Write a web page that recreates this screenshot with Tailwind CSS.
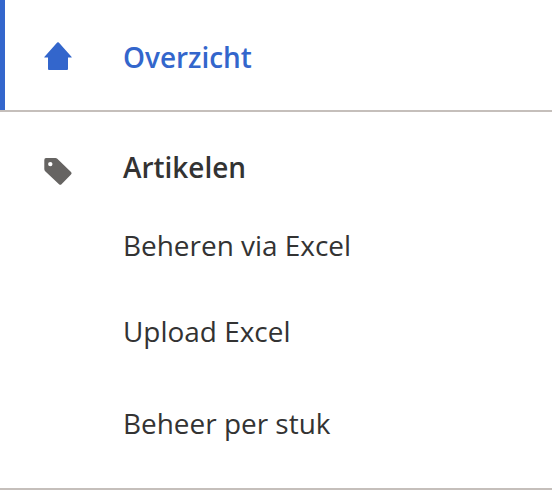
<!DOCTYPE html>
<html lang="nl"><head><meta charset="utf-8"><title>Menu</title><script src="https://cdn.jsdelivr.net/npm/@tailwindcss/browser@4"></script></head>
<body class="bg-white font-['Open_Sans',sans-serif] text-[27.95px] leading-[40px] text-[#333333] antialiased">
<nav class="flex h-[490px] w-[552px] flex-col overflow-hidden">
<a class="flex h-[112px] border-b-2 border-[#c5bfbb] font-semibold text-[#3366cc]"><span class="h-[110px] w-[5px] bg-[#3366cc]"></span>
<svg class="mt-[42px] ml-[39px] h-[29px] w-[28px]" viewBox="0 0 28 29" fill="#3366cc"><path d="M13.200 .6Q14 -.1 14.800 .6L27.700 15Q27.900 15.500 27.300 15.500H24V27Q24 28 23 28H5Q4 28 4 27V15.500H.7Q.1 15.500 .3 15Z"/></svg>
<span class="mt-[37px] ml-[51px]">Overzicht</span></a>
<section class="flex h-[378px] border-b-2 border-[#c5bfbb]">
<svg class="mt-[45px] ml-[44px] h-[29px] w-[28px]" viewBox="0 0 28 29" fill="#666462"><path fill-rule="evenodd" d="M2 1H11.500Q12.500 1 13.300 1.800L27 15Q28.200 16.300 27 17.500L17.500 27.200Q16.300 28.400 15 27.200L1.200 14.200Q.3 13.200 .3 12V3Q.3 1 2 1ZM6.300 4.900A2.200 2.200 0 1 0 6.300 9.300A2.200 2.200 0 1 0 6.300 4.900Z"/></svg>
<div class="ml-[51px] pt-[35px]"><h2 class="font-semibold">Artikelen</h2>
<ul><li class="mt-[38px]">Beheren via Excel</li><li class="mt-[46px]">Upload Excel</li><li class="mt-[52px]">Beheer per stuk</li></ul></div>
</section></nav></body></html>
